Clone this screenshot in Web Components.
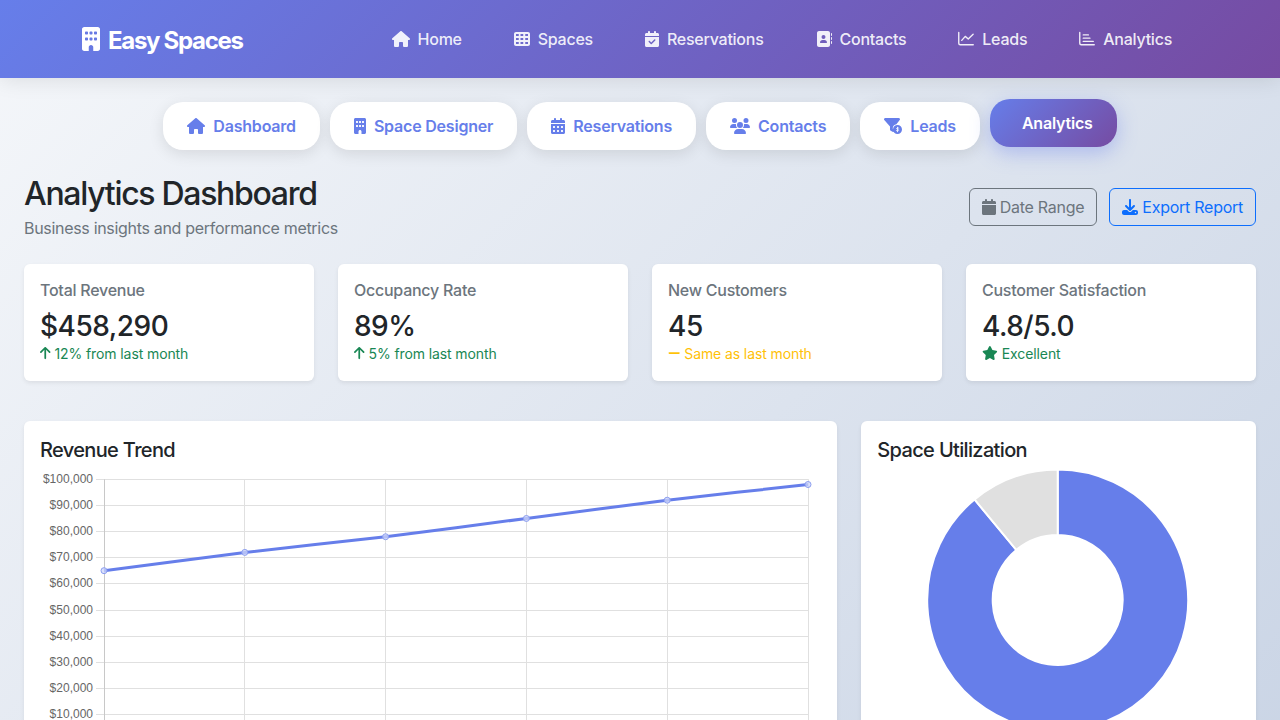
<!DOCTYPE html>
<html lang="en">
<head>
<meta charset="utf-8">
<title>Easy Spaces - Analytics</title>
<style>
    html, body { margin: 0; height: 720px; overflow: hidden; }
    body
    {
        font-family: Inter, "Liberation Sans", sans-serif;
        font-size: 16px;
        line-height: 1.5;
        color: #212529;
    }
</style>
</head>
<body>
<es-app>
    <es-header slot="header" brand="Easy Spaces">
        <nav-link icon="house" label="Home"></nav-link>
        <nav-link icon="grid" label="Spaces"></nav-link>
        <nav-link icon="calendar-check" label="Reservations"></nav-link>
        <nav-link icon="address-book" label="Contacts"></nav-link>
        <nav-link icon="chart-line" label="Leads"></nav-link>
        <nav-link icon="chart-bar" label="Analytics"></nav-link>
    </es-header>

    <es-tabs>
        <tab-pill icon="house" label="Dashboard"></tab-pill>
        <tab-pill icon="building" label="Space Designer"></tab-pill>
        <tab-pill icon="calendar-days" label="Reservations"></tab-pill>
        <tab-pill icon="users" label="Contacts"></tab-pill>
        <tab-pill icon="funnel-dollar" label="Leads"></tab-pill>
        <tab-pill label="Analytics" active></tab-pill>
    </es-tabs>

    <page-head heading="Analytics Dashboard" sub="Business insights and performance metrics">
        <action-button icon="calendar" label="Date Range" color="#6c757d"></action-button>
        <action-button icon="download" label="Export Report" color="#0d6efd"></action-button>
    </page-head>

    <stat-row>
        <stat-card label="Total Revenue" value="$458,290" note="12% from last month" icon="arrow-up" tone="#198754"></stat-card>
        <stat-card label="Occupancy Rate" value="89%" note="5% from last month" icon="arrow-up" tone="#198754"></stat-card>
        <stat-card label="New Customers" value="45" note="Same as last month" icon="minus" tone="#ffc107"></stat-card>
        <stat-card label="Customer Satisfaction" value="4.8/5.0" note="Excellent" icon="star" tone="#198754"></stat-card>
    </stat-row>

    <chart-row>
        <chart-card heading="Revenue Trend"><line-chart></line-chart></chart-card>
        <chart-card heading="Space Utilization"><donut-chart></donut-chart></chart-card>
    </chart-row>
</es-app>

<script>
const AXIS = '<path d="M24 48V392a48 48 0 0 0 48 48H488" fill="none" stroke="currentColor" stroke-width="44" stroke-linecap="round"/>';

// icon paths, [viewBox width, d, extra svg]
const ICONS = {
    'house': [576, 'M575.8 255.5c0 18-15 32.1-32 32.1h-32l.7 160.2c0 2.7-.2 5.4-.5 8.1V472c0 22.1-17.9 40-40 40H456c-1.1 0-2.2 0-3.3-.1c-1.4 .1-2.8 .1-4.2 .1H416 392c-22.1 0-40-17.9-40-40V448 384c0-17.7-14.3-32-32-32H256c-17.7 0-32 14.3-32 32v64 24c0 22.1-17.9 40-40 40H160 128.1c-1.5 0-3-.1-4.5-.2c-1.2 .1-2.4 .2-3.6 .2H104c-22.1 0-40-17.9-40-40V360c0-.9 0-1.9 .1-2.8V287.6H32c-18 0-32-14-32-32.1c0-9 3-17 10-24L266.4 8c7-7 15-8 22-8s15 2 21 7L564.8 231.5c8 7 12 15 11 24z'],
    'building': [384, 'M48 0C21.5 0 0 21.5 0 48V464c0 26.5 21.5 48 48 48h96V432c0-26.5 21.5-48 48-48s48 21.5 48 48v80h96c26.5 0 48-21.5 48-48V48c0-26.5-21.5-48-48-48H48zM64 240c0-8.8 7.2-16 16-16h32c8.8 0 16 7.2 16 16v32c0 8.8-7.2 16-16 16H80c-8.8 0-16-7.2-16-16V240zm112-16h32c8.8 0 16 7.2 16 16v32c0 8.8-7.2 16-16 16H176c-8.8 0-16-7.2-16-16V240c0-8.8 7.2-16 16-16zm80 16c0-8.8 7.2-16 16-16h32c8.8 0 16 7.2 16 16v32c0 8.8-7.2 16-16 16H272c-8.8 0-16-7.2-16-16V240zM80 96h32c8.8 0 16 7.2 16 16v32c0 8.8-7.2 16-16 16H80c-8.8 0-16-7.2-16-16V112c0-8.8 7.2-16 16-16zm80 16c0-8.8 7.2-16 16-16h32c8.8 0 16 7.2 16 16v32c0 8.8-7.2 16-16 16H176c-8.8 0-16-7.2-16-16V112zM272 96h32c8.8 0 16 7.2 16 16v32c0 8.8-7.2 16-16 16H272c-8.8 0-16-7.2-16-16V112c0-8.8 7.2-16 16-16z'],
    'grid': [512, 'M64 32C28.7 32 0 60.7 0 96V416c0 35.3 28.7 64 64 64H448c35.3 0 64-28.7 64-64V96c0-35.3-28.7-64-64-64H64zm88 64v64H64V96h88zm56 0h88v64H208V96zm240 0v64H360V96h88zM64 224h88v64H64V224zm232 0v64H208V224h88zm64 0h88v64H360V224zM152 352v64H64V352h88zm56 0h88v64H208V352zm240 0v64H360V352h88z'],
    'calendar-check': [448, 'M128 0c17.7 0 32 14.3 32 32V64H288V32c0-17.7 14.3-32 32-32s32 14.3 32 32V64h48c26.5 0 48 21.5 48 48v48H0V112C0 85.5 21.5 64 48 64H96V32c0-17.7 14.3-32 32-32zM0 192H448V464c0 26.5-21.5 48-48 48H48c-26.5 0-48-21.5-48-48V192zM329 305c9.4-9.4 9.4-24.6 0-33.9s-24.6-9.4-33.9 0l-95 95-47-47c-9.4-9.4-24.6-9.4-33.9 0s-9.4 24.6 0 33.9l64 64c9.4 9.4 24.6 9.4 33.9 0L329 305z'],
    'address-book': [512, 'M96 0C60.7 0 32 28.7 32 64V448c0 35.3 28.7 64 64 64H384c35.3 0 64-28.7 64-64V64c0-35.3-28.7-64-64-64H96zM208 288h64c44.2 0 80 35.8 80 80c0 8.8-7.2 16-16 16H144c-8.8 0-16-7.2-16-16c0-44.2 35.8-80 80-80zm-32-96a64 64 0 1 1 128 0 64 64 0 1 1 -128 0zM512 80c0-8.8-7.2-16-16-16s-16 7.2-16 16v64c0 8.8 7.2 16 16 16s16-7.2 16-16V80zM496 192c-8.8 0-16 7.2-16 16v64c0 8.8 7.2 16 16 16s16-7.2 16-16V208c0-8.8-7.2-16-16-16zm16 144c0-8.8-7.2-16-16-16s-16 7.2-16 16v64c0 8.8 7.2 16 16 16s16-7.2 16-16V336z'],
    'chart-line': [512, '', AXIS + '<path d="M120 300L232 172L328 256L484 104" fill="none" stroke="currentColor" stroke-width="44" stroke-linecap="round" stroke-linejoin="round"/>'],
    'chart-bar': [512, '', AXIS + '<path d="M136 124H300M136 228H350M136 332H456" fill="none" stroke="currentColor" stroke-width="44" stroke-linecap="round"/>'],
    'calendar-days': [448, 'M128 0c17.7 0 32 14.3 32 32V64H288V32c0-17.7 14.3-32 32-32s32 14.3 32 32V64h48c26.5 0 48 21.5 48 48v48H0V112C0 85.5 21.5 64 48 64H96V32c0-17.7 14.3-32 32-32zM0 192H448V464c0 26.5-21.5 48-48 48H48c-26.5 0-48-21.5-48-48V192zm64 80v32c0 8.8 7.2 16 16 16h32c8.8 0 16-7.2 16-16V272c0-8.8-7.2-16-16-16H80c-8.8 0-16 7.2-16 16zm128 0v32c0 8.8 7.2 16 16 16h32c8.8 0 16-7.2 16-16V272c0-8.8-7.2-16-16-16H208c-8.8 0-16 7.2-16 16zm144-16c-8.8 0-16 7.2-16 16v32c0 8.8 7.2 16 16 16h32c8.8 0 16-7.2 16-16V272c0-8.8-7.2-16-16-16H336zM64 400v32c0 8.8 7.2 16 16 16h32c8.8 0 16-7.2 16-16V400c0-8.8-7.2-16-16-16H80c-8.8 0-16 7.2-16 16zm144-16c-8.8 0-16 7.2-16 16v32c0 8.8 7.2 16 16 16h32c8.8 0 16-7.2 16-16V400c0-8.8-7.2-16-16-16H208zm112 16v32c0 8.8 7.2 16 16 16h32c8.8 0 16-7.2 16-16V400c0-8.8-7.2-16-16-16H336c-8.8 0-16 7.2-16 16z'],
    'calendar': [448, 'M96 32V64H48C21.5 64 0 85.5 0 112v48H448V112c0-26.5-21.5-48-48-48H352V32c0-17.7-14.3-32-32-32s-32 14.3-32 32V64H160V32c0-17.7-14.3-32-32-32S96 14.3 96 32zM448 192H0V464c0 26.5 21.5 48 48 48H400c26.5 0 48-21.5 48-48V192z'],
    'users': [640, 'M144 0a80 80 0 1 1 0 160A80 80 0 1 1 144 0zM512 0a80 80 0 1 1 0 160A80 80 0 1 1 512 0zM0 298.7C0 239.8 47.8 192 106.7 192h42.7c15.9 0 31 3.5 44.6 9.7c-1.3 7.2-1.9 14.7-1.9 22.3c0 38.2 16.8 72.5 43.3 96c-.2 0-.4 0-.7 0H21.3C9.6 320 0 310.4 0 298.7zM405.3 320c-.2 0-.4 0-.7 0c26.6-23.5 43.3-57.8 43.3-96c0-7.6-.7-15-1.9-22.3c13.6-6.3 28.7-9.7 44.6-9.7h42.7C592.2 192 640 239.8 640 298.7c0 11.8-9.6 21.3-21.3 21.3H405.3zM224 224a96 96 0 1 1 192 0 96 96 0 1 1 -192 0zM128 485.3C128 411.7 187.7 352 261.3 352H378.7C452.3 352 512 411.7 512 485.3c0 14.7-11.9 26.7-26.7 26.7H154.7c-14.7 0-26.7-11.9-26.7-26.7z'],
    'funnel-dollar': [576, 'M3.9 22.9C10.5 8.9 24.5 0 40 0H472c15.5 0 29.5 8.9 36.1 22.9s4.6 30.5-5.2 42.5L396.4 196.1C331.2 203.9 280 259.1 280 326.4c0 35.5 14.2 67.7 37.2 91.2L305 438c-10 8-25 9-35 2L205 400c-8-6-13-15-13-26V268L9.1 65.3C-.7 53.4-2.8 36.8 3.9 22.9zM432 224a144 144 0 1 1 0 288 144 144 0 1 1 0-288z', '<path d="M476 326c-12-14-64-20-72 8c-8 30 70 22 64 58c-6 26-60 24-76 8M432 296v144" fill="none" stroke="#fff" stroke-width="26" stroke-linecap="round"/>'],
    'download': [512, 'M288 32c0-17.7-14.3-32-32-32s-32 14.3-32 32V274.7l-73.4-73.4c-12.5-12.5-32.8-12.5-45.3 0s-12.5 32.8 0 45.3l128 128c12.5 12.5 32.8 12.5 45.3 0l128-128c12.5-12.5 12.5-32.8 0-45.3s-32.8-12.5-45.3 0L288 274.7V32zM64 352c-35.3 0-64 28.7-64 64v32c0 35.3 28.7 64 64 64H448c35.3 0 64-28.7 64-64V416c0-35.3-28.7-64-64-64H346.5l-45.3 45.3c-25 25-65.5 25-90.5 0L165.5 352H64zm368 56a24 24 0 1 1 0 48 24 24 0 1 1 0-48z'],
    'star': [576, 'M316.9 18C311.6 7 300.4 0 288.1 0s-23.4 7-28.8 18L195 150.3 51.4 171.5c-12 1.8-22 10.2-25.7 21.7s-.7 24.2 7.9 32.7L137.8 329 113.2 474.7c-2 12 3 24.2 12.9 31.3s23 8 33.8 2.3l128.3-68.5 128.3 68.5c10.8 5.7 23.9 4.9 33.8-2.3s14.9-19.3 12.9-31.3L438.5 329 542.7 225.9c8.6-8.5 11.7-21.2 7.9-32.7s-13.7-19.9-25.7-21.7L381.2 150.3 316.9 18z'],
    'arrow-up': [384, 'M214.6 41.4c-12.5-12.5-32.8-12.5-45.3 0l-160 160c-12.5 12.5-12.5 32.8 0 45.3s32.8 12.5 45.3 0L160 141.2V448c0 17.7 14.3 32 32 32s32-14.3 32-32V141.2L329.4 246.6c12.5 12.5 32.8 12.5 45.3 0s12.5-32.8 0-45.3l-160-160z'],
    'minus': [448, 'M432 256c0 17.7-14.3 32-32 32L48 288c-17.7 0-32-14.3-32-32s14.3-32 32-32l352 0c17.7 0 32 14.3 32 32z']
};

// small base so every element below just declares its styles + markup
class ShadowElement extends HTMLElement
{
    constructor()
    {
        super();
        this.attachShadow({mode: 'open'});
    }

    connectedCallback()
    {
        this.shadowRoot.innerHTML = `<style>${this.styles()}</style>${this.markup()}`;
    }

    styles() { return ':host { display: block; }'; }
    markup() { return '<slot></slot>'; }
    attr(name) { return this.getAttribute(name) || ''; }
}

class EsIcon extends ShadowElement
{
    styles()
    {
        return `:host { display: inline-flex; align-items: center; flex: none; }
                svg { display: block; fill: currentColor; overflow: visible; }`;
    }

    markup()
    {
        const [w, d, extra] = ICONS[this.attr('name')];
        const size = Number(this.attr('size')) || 16;
        return `<svg viewBox="0 0 ${w} 512" width="${size * w / 512}" height="${size}"><path d="${d}"/>${extra || ''}</svg>`;
    }
}
customElements.define('es-icon', EsIcon);

class EsApp extends ShadowElement
{
    styles()
    {
        return `:host { display: block; min-height: 1100px; background: linear-gradient(135deg, #f5f7fa 0%, #c3cfe2 100%); }
                main { padding: 24px; }`;
    }

    markup()
    {
        return `<slot name="header"></slot><main><slot></slot></main>`;
    }
}
customElements.define('es-app', EsApp);

class EsHeader extends ShadowElement
{
    styles()
    {
        return `:host {
                    display: flex; align-items: center; justify-content: space-between;
                    height: 78px; padding: 0 108px 0 82px; box-sizing: border-box;
                    background: linear-gradient(135deg, #667eea 0%, #764ba2 100%);
                    box-shadow: 0 2px 20px rgba(0,0,0,.1);
                    color: #fff; position: relative;
                }
                .brand { display: flex; align-items: center; gap: 8px; font-size: 24px; font-weight: 700; letter-spacing: -1.3px; }
                .brand span { padding-top: 3px; }
                nav { display: flex; gap: 52px; }`;
    }

    markup()
    {
        return `<div class="brand"><es-icon name="building" size="24"></es-icon><span>${this.attr('brand')}</span></div>
                <nav><slot></slot></nav>`;
    }
}
customElements.define('es-header', EsHeader);

class NavLink extends ShadowElement
{
    styles()
    {
        return `:host { display: flex; align-items: center; gap: 8px; font-weight: 500; letter-spacing: -.25px; color: rgba(255,255,255,.9); }`;
    }

    markup()
    {
        return `<es-icon name="${this.attr('icon')}"></es-icon><span>${this.attr('label')}</span>`;
    }
}
customElements.define('nav-link', NavLink);

class EsTabs extends ShadowElement
{
    styles()
    {
        return `:host { display: flex; justify-content: center; align-items: flex-start; gap: 10px; margin-bottom: 25px; }`;
    }
}
customElements.define('es-tabs', EsTabs);

class TabPill extends ShadowElement
{
    styles()
    {
        return `:host {
                    display: flex; align-items: center; gap: 8px; height: 48px; padding: 0 24px; box-sizing: border-box;
                    border-radius: 20px; background: #fff; color: #667eea; font-weight: 600; letter-spacing: -.2px;
                    box-shadow: 0 4px 15px rgba(0,0,0,.1);
                }
                :host([active]) {
                    padding-left: 32px; margin-top: -3px; color: #fff;
                    background: linear-gradient(135deg, #667eea 0%, #764ba2 100%);
                    box-shadow: 0 6px 20px rgba(102,126,234,.4);
                }`;
    }

    markup()
    {
        const icon = this.attr('icon');
        return `${icon ? `<es-icon name="${icon}"></es-icon>` : ''}<span>${this.attr('label')}</span>`;
    }
}
customElements.define('tab-pill', TabPill);

class PageHead extends ShadowElement
{
    styles()
    {
        return `:host { display: flex; justify-content: space-between; align-items: center; margin-bottom: 24px; }
                h1 { margin: 0 0 2.6px; font-size: 32px; line-height: 1.2; font-weight: 500; letter-spacing: -1.3px; }
                p { margin: 0; color: #6c757d; letter-spacing: -.31px; }
                .actions { display: flex; gap: 12px; }`;
    }

    markup()
    {
        return `<div><h1>${this.attr('heading')}</h1><p>${this.attr('sub')}</p></div>
                <div class="actions"><slot></slot></div>`;
    }
}
customElements.define('page-head', PageHead);

class ActionButton extends ShadowElement
{
    styles()
    {
        const color = this.attr('color');
        return `:host {
                    display: flex; align-items: center; gap: 4px; height: 38px; padding: 0 12px; box-sizing: border-box;
                    border: 1px solid ${color}; border-radius: 6px; color: ${color}; letter-spacing: -.26px;
                }`;
    }

    markup()
    {
        return `<es-icon name="${this.attr('icon')}"></es-icon><span>${this.attr('label')}</span>`;
    }
}
customElements.define('action-button', ActionButton);

class StatRow extends ShadowElement
{
    styles()
    {
        return `:host { display: grid; grid-template-columns: repeat(4, 1fr); gap: 24px; margin-bottom: 40px; }`;
    }
}
customElements.define('stat-row', StatRow);

class StatCard extends ShadowElement
{
    styles()
    {
        return `:host {
                    display: block; padding: 16px; background: #fff; border-radius: 6px;
                    box-shadow: 0 2px 4px rgba(0,0,0,.075);
                }
                .label { font-size: 16px; line-height: 21.2px; font-weight: 500; letter-spacing: -.25px; color: #6c757d; margin-bottom: 8px; }
                .value { font-size: 28px; line-height: 34.6px; font-weight: 500; letter-spacing: -.5px; margin-bottom: -.8px; }
                .note { display: flex; align-items: center; gap: 4px; font-size: 14px; line-height: 21px; letter-spacing: -.1px; padding-bottom: 1px; }`;
    }

    markup()
    {
        return `<div class="label">${this.attr('label')}</div>
                <div class="value">${this.attr('value')}</div>
                <div class="note" style="color:${this.attr('tone')}"><es-icon name="${this.attr('icon')}" size="14"></es-icon><span>${this.attr('note')}</span></div>`;
    }
}
customElements.define('stat-card', StatCard);

class ChartRow extends ShadowElement
{
    styles()
    {
        return `:host { display: grid; grid-template-columns: 813.33px 1fr; gap: 24px; }`;
    }
}
customElements.define('chart-row', ChartRow);

class ChartCard extends ShadowElement
{
    styles()
    {
        return `:host {
                    display: block; padding: 16px; background: #fff; border-radius: 6px;
                    box-shadow: 0 2px 4px rgba(0,0,0,.075);
                }
                h5 { margin: 0 0 6px; font-size: 20px; line-height: 26px; font-weight: 500; letter-spacing: -.65px; }`;
    }

    markup()
    {
        return `<h5>${this.attr('heading')}</h5><slot></slot>`;
    }
}
customElements.define('chart-card', ChartCard);

// x/y of the svg are in page pixels minus the card origin (40,469)
class LineChart extends ShadowElement
{
    styles()
    {
        return `:host { display: block; height: 400px; }
                svg { display: block; overflow: visible; }
                text { font: 12px "Liberation Sans", Arial, sans-serif; fill: #666; text-anchor: end; }`;
    }

    markup()
    {
        const top = 10.3, step = 26.11, right = 768.5;
        const gridX = [64.5, 204.5, 345.5, 486.5, 627.5, 768.5];
        const xs = [0, 1, 2, 3, 4, 5].map(i => 64 + i * 140.8);
        const data = [65, 72, 78, 85, 92, 98];
        const yOf = v => top + (100 - v) / 10 * step;
        const bottom = yOf(-1);

        let grid = '';
        for(let v = 100; v >= 10; v -= 10)
        {
            const y = Math.floor(yOf(v) + .2) + .5;
            grid += `<line x1="56" x2="${right}" y1="${y}" y2="${y}" stroke="#e0e0e0"/>`;
            grid += `<text x="53" y="${y + 3}">$${v},000</text>`;
        }
        gridX.forEach((x, i) => {
            grid += `<line x1="${x}" x2="${x}" y1="${top}" y2="${bottom}" stroke="${i ? '#e0e0e0' : '#c8c8c8'}"/>`;
        });

        const pts = data.map((v, i) => [xs[i], yOf(v)]);
        let d = `M${pts[0]}`;
        for(let i = 1; i < pts.length; i++)
        {
            const p0 = pts[Math.max(i - 2, 0)], p1 = pts[i - 1], p2 = pts[i], p3 = pts[Math.min(i + 1, pts.length - 1)];
            const t = .1 / 2;
            d += `C${p1[0] + (p2[0] - p0[0]) * t} ${p1[1] + (p2[1] - p0[1]) * t} ${p2[0] - (p3[0] - p1[0]) * t} ${p2[1] - (p3[1] - p1[1]) * t} ${p2[0]} ${p2[1]}`;
        }
        const dots = pts.map(p => `<circle cx="${p[0]}" cy="${p[1]}" r="3" fill="rgba(205,214,250,.75)" stroke="#8c9ef0" stroke-width="1"/>`).join('');

        return `<svg width="781" height="400">${grid}<path d="${d}" fill="none" stroke="#667eea" stroke-width="3"/>${dots}</svg>`;
    }
}
customElements.define('line-chart', LineChart);

class DonutChart extends ShadowElement
{
    styles()
    {
        return `:host { display: block; height: 400px; }
                svg { display: block; overflow: visible; }`;
    }

    markup()
    {
        const cx = 180.7, cy = 131, R = 130.5, r = 65;
        const pt = (rad, a) => [cx + rad * Math.sin(a), cy - rad * Math.cos(a)];
        const slice = (from, to, fill) => {
            const a = to - from;
            const large = a > Math.PI ? 1 : 0;
            const [x1, y1] = pt(R, from), [x2, y2] = pt(R, to), [x3, y3] = pt(r, to), [x4, y4] = pt(r, from);
            return `<path d="M${x1} ${y1}A${R} ${R} 0 ${large} 1 ${x2} ${y2}L${x3} ${y3}A${r} ${r} 0 ${large} 0 ${x4} ${y4}Z" fill="${fill}" stroke="#fff" stroke-width="2"/>`;
        };
        const split = .89 * 2 * Math.PI;
        return `<svg width="363" height="400">${slice(0, split, '#667eea')}${slice(split, 2 * Math.PI, '#e0e0e0')}</svg>`;
    }
}
customElements.define('donut-chart', DonutChart);
</script>
</body>
</html>
